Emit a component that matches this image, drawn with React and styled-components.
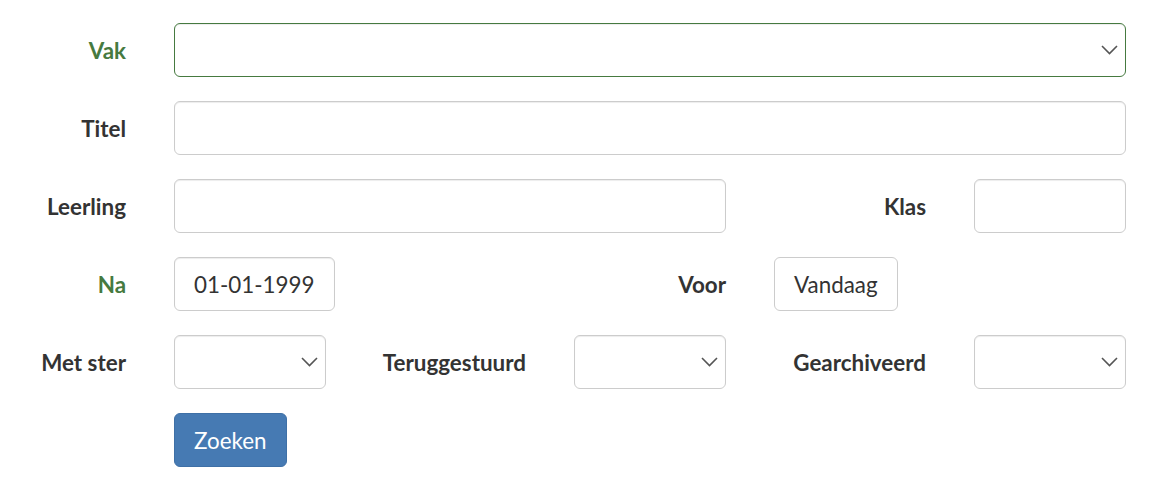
import React from "react";
import styled, { createGlobalStyle } from "styled-components";

const Global = createGlobalStyle`
  html, body { margin: 0; padding: 0; background: #fff; }
  body { font-family: Lato, "Open Sans", "Liberation Sans", sans-serif; color: #333; }
  * { box-sizing: border-box; }
`;

const Form = styled.form`
  display: grid;
  grid-template-columns: 126px repeat(5, 152px);
  column-gap: 48px;
  row-gap: 24px;
  grid-auto-rows: 54px;
  padding-top: 23px;
`;

const Label = styled.label`
  grid-column: ${(p) => p.$col || 1};
  display: flex;
  align-items: center;
  justify-content: flex-end;
  font-size: 22.4px;
  font-weight: 700;
  color: ${(p) => (p.$success ? "#467a40" : "#333")};
  white-space: nowrap;
`;

const Field = styled.div`
  grid-column: ${(p) => p.$col} / span ${(p) => p.$span || 1};
  position: relative;
  display: flex;
  align-items: stretch;
`;

const Input = styled.input`
  height: 54px;
  width: ${(p) => p.$width || "100%"};
  padding: 0 19px;
  font-family: inherit;
  font-size: 22.4px;
  color: #333;
  background: #fff;
  border: 1px solid ${(p) => (p.$success ? "#467a40" : "#ccc")};
  border-radius: 6px;
  box-shadow: inset 0 1px 1px rgba(0, 0, 0, 0.075);
  outline: none;
`;

const Select = styled.select`
  appearance: none;
  -webkit-appearance: none;
  height: 54px;
  width: 100%;
  padding: 0 40px 0 19px;
  font-family: inherit;
  font-size: 22.4px;
  color: #333;
  background: #fff;
  border: 1px solid ${(p) => (p.$success ? "#467a40" : "#ccc")};
  border-radius: 6px;
  box-shadow: inset 0 1px 1px rgba(0, 0, 0, 0.075);
  outline: none;
`;

const Chevron = styled.svg`
  position: absolute;
  right: 8px;
  top: 50%;
  transform: translateY(-50%);
  width: 17px;
  height: 10px;
  pointer-events: none;
`;

const Button = styled.button`
  height: 54px;
  padding: 0 19px;
  font-family: inherit;
  font-size: 22.4px;
  color: ${(p) => (p.$primary ? "#fff" : "#333")};
  background: ${(p) => (p.$primary ? "#467ab3" : "#fff")};
  border: 1px solid ${(p) => (p.$primary ? "#3f70a6" : "#ccc")};
  border-radius: 6px;
  cursor: pointer;
`;

const Arrow = () => (
  <Chevron viewBox="0 0 17 10">
    <path d="M1 1 L8.5 8.5 L16 1" fill="none" stroke="#555" strokeWidth="1.6" />
  </Chevron>
);

const SelectField = ({ col, span, success }) => (
  <Field $col={col} $span={span}>
    <Select $success={success} defaultValue="">
      <option value=""></option>
    </Select>
    <Arrow />
  </Field>
);

export default function App() {
  return (
    <>
      <Global />
      <Form onSubmit={(e) => e.preventDefault()}>
        <Label $success>Vak</Label>
        <SelectField col={2} span={5} success />

        <Label>Titel</Label>
        <Field $col={2} $span={5}>
          <Input type="text" />
        </Field>

        <Label>Leerling</Label>
        <Field $col={2} $span={3}>
          <Input type="text" />
        </Field>
        <Label $col={5}>Klas</Label>
        <Field $col={6}>
          <Input type="text" />
        </Field>

        <Label $success>Na</Label>
        <Field $col={2} $span={2}>
          <Input $width="161px" type="text" defaultValue="01-01-1999" />
        </Field>
        <Label $col={4}>Voor</Label>
        <Field $col={5} $span={2}>
          <Button type="button">Vandaag</Button>
        </Field>

        <Label>Met ster</Label>
        <SelectField col={2} />
        <Label $col={3}>Teruggestuurd</Label>
        <SelectField col={4} />
        <Label $col={5}>Gearchiveerd</Label>
        <SelectField col={6} />

        <Field $col={2} $span={2}>
          <Button $primary type="submit">Zoeken</Button>
        </Field>
      </Form>
    </>
  );
}
